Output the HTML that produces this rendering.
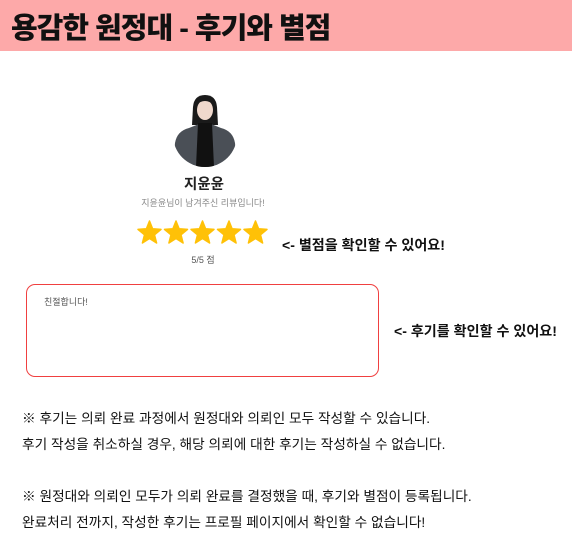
<!DOCTYPE html>
<html><head><meta charset="utf-8"><style>
*{margin:0;padding:0;box-sizing:border-box}
body{width:572px;height:552px;background:#fff;position:relative;overflow:hidden;font-family:"Liberation Sans","Noto Sans CJK KR",sans-serif;color:#111}
.hdr{position:absolute;left:0;top:0;width:572px;height:51px;background:#fda9a9}
.hdr span{position:absolute;left:11px;top:5px;font-size:29px;font-weight:900;letter-spacing:-1px;color:#111}
.abs{position:absolute;white-space:nowrap}
</style></head><body>
<div class="hdr"><span>용감한 원정대 - 후기와 별점</span></div>
<svg class="abs" style="left:173px;top:93px" width="64" height="74" viewBox="0 0 64 74">
<defs><clipPath id="c"><circle cx="32" cy="42" r="32"/><rect x="0" y="0" width="64" height="42"/></clipPath></defs>
<g clip-path="url(#c)">
<path d="M20 14 Q21 2 32 2 Q43 2 44 14 L45 32 L19 32 Z" fill="#1a1a1a"/>
<ellipse cx="32" cy="17" rx="8" ry="10" fill="#f0d8cc"/>
<path d="M23 12 Q32 4 41 12 L41 9 Q32 1 23 9Z" fill="#1a1a1a"/>
<path d="M2 50 Q4 38 16 35 L26 31 L38 31 L48 35 Q60 38 62 50 L64 74 L0 74Z" fill="#4a4f56"/>
<path d="M25 30 L39 30 L41 74 L23 74Z" fill="#111"/>
</g></svg>
<div class="abs" style="left:0;width:408px;top:173px;text-align:center;font-size:14.5px;font-weight:700;color:#222">지윤윤</div>
<div class="abs" style="left:0;width:406px;top:196px;text-align:center;font-size:9px;color:#888">지윤윤님이 남겨주신 리뷰입니다!</div>
<svg class="abs" style="left:137px;top:220px" width="133" height="26" viewBox="0 0 133 26">
<defs><path id="s" d="M12.5 1 L15.6 8.8 L24 9.4 L17.5 14.8 L19.6 23 L12.5 18.5 L5.4 23 L7.5 14.8 L1 9.4 L9.4 8.8Z" fill="#ffc107" stroke="#ffc107" stroke-width="1.5" stroke-linejoin="round"/></defs>
<use href="#s" x="0"/><use href="#s" x="26.5"/><use href="#s" x="53"/><use href="#s" x="79.5"/><use href="#s" x="106"/>
</svg>
<div class="abs" style="left:0;width:406px;top:253px;text-align:center;font-size:9px;color:#555">5/5 점</div>
<div class="abs" style="left:282px;top:235px;font-size:14.1px;font-weight:700">&lt;- 별점을 확인할 수 있어요!</div>
<div class="abs" style="left:26px;top:284px;width:353px;height:93px;border:1.5px solid #f04040;border-radius:9px"></div>
<div class="abs" style="left:44px;top:295px;font-size:9px;color:#555">친절합니다!</div>
<div class="abs" style="left:394px;top:321px;font-size:14.1px;font-weight:700">&lt;- 후기를 확인할 수 있어요!</div>
<div class="abs" style="left:22px;top:406px;font-size:13.7px;line-height:25.5px;color:#111">※ 후기는 의뢰 완료 과정에서 원정대와 의뢰인 모두 작성할 수 있습니다.<br>후기 작성을 취소하실 경우, 해당 의뢰에 대한 후기는 작성하실 수 없습니다.</div>
<div class="abs" style="left:22px;top:484px;font-size:13.7px;line-height:25.5px;color:#111">※ 원정대와 의뢰인 모두가 의뢰 완료를 결정했을 때, 후기와 별점이 등록됩니다.<br>완료처리 전까지, 작성한 후기는 프로필 페이지에서 확인할 수 없습니다!</div>
</body></html>
